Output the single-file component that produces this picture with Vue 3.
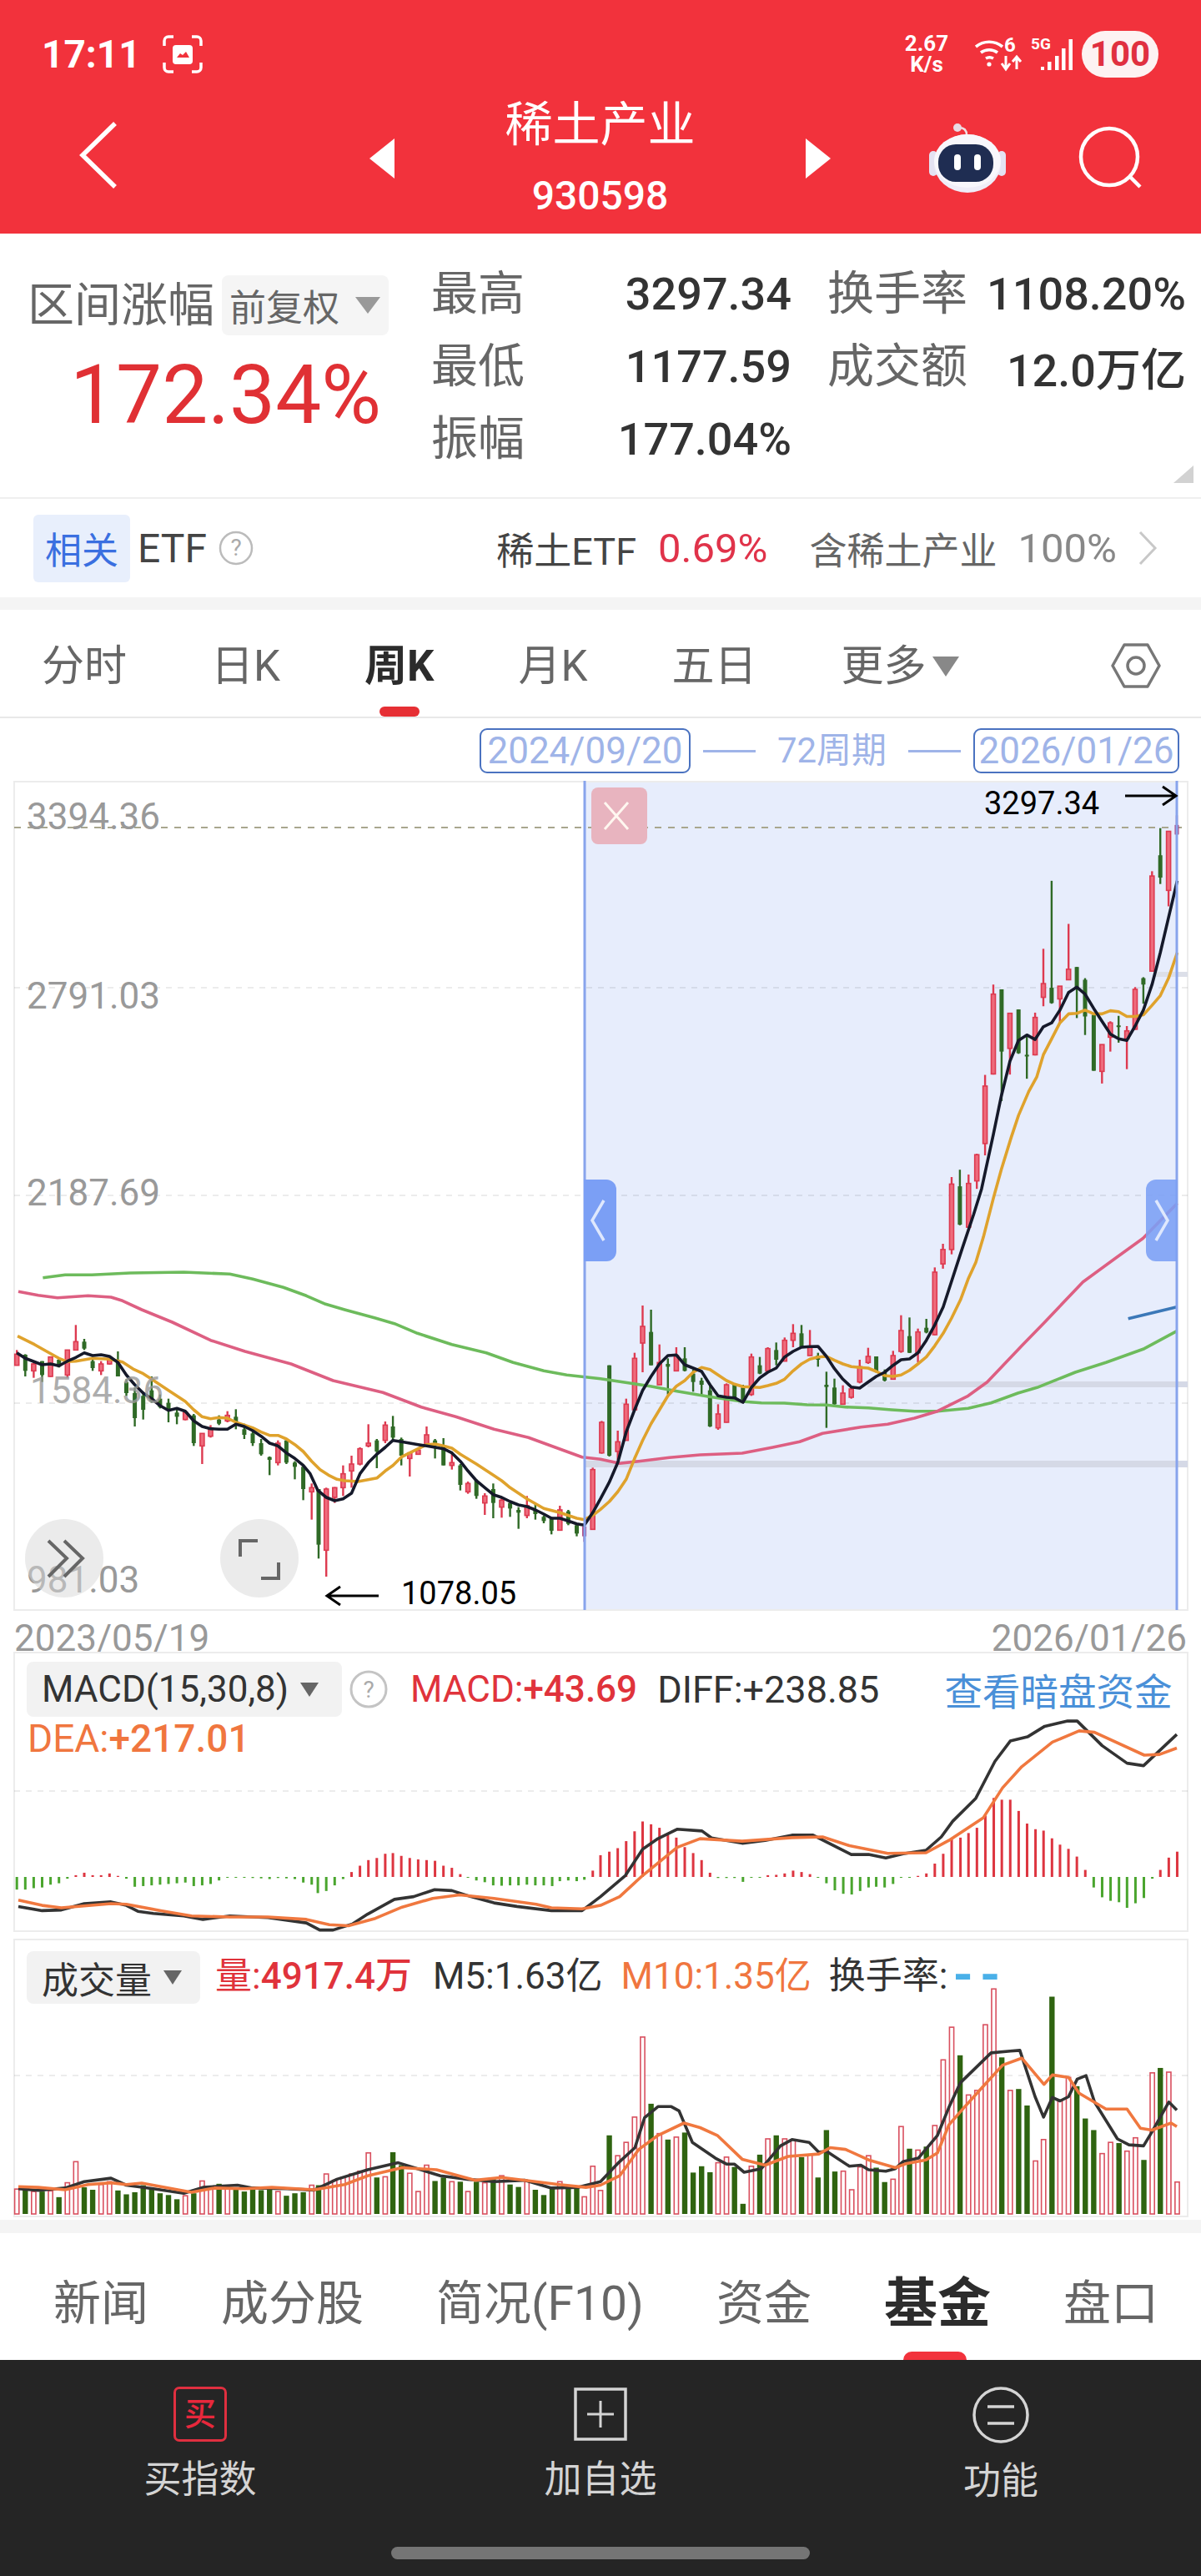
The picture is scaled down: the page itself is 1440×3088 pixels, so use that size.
<script setup>
const zA = (x, y) => [x / 2.178, 1500 + y / 3]
const zB = (x, y) => [720 + x / 2.178, 1500 + y / 3]
const zC = (x, y) => [700 + x / 2.118, 920 + y / 2.613]
const zM = (x, y) => [x / 2.178, 2000 + y / 2.376]
const zN = (x, y) => [720 + x / 2.178, 2000 + y / 2.376]

const line = (parts) =>
  parts
    .map(([f, pts]) => {
      let out = []
      for (let i = 0; i < pts.length; i += 2) out.push(f(pts[i], pts[i + 1]).map((v) => v.toFixed(1)).join(','))
      return out.join(' ')
    })
    .join(' ')

const rawA = `44 r 355 370 410 410;66 g 370 372 430 450;88 r 400 405 430 455;110 g 395 395 445 470;132 r 378 380 450 452;154 g 385 390 415 418;176 r 355 355 445 455;198 r 265 325 355 355;220 g 315 325 350 355;242 g 385 395 420 430;264 r 395 405 430 445;286 r 380 385 405 408;308 g 360 390 450 450;330 g 460 470 510 520;352 g 490 510 600 630;374 g 505 520 570 605;396 g 450 500 540 545;418 g 515 530 560 565;440 g 530 545 570 615;462 g 570 580 595 622;484 r 575 580 605 608;506 g 585 590 690 700;528 r 655 655 700 765;550 r 625 635 665 670;572 g 590 605 620 625;594 r 575 590 610 615;616 g 568 595 615 640;638 g 620 640 660 675;660 g 645 655 690 700;682 g 675 690 730 735;704 g 738 740 750 805;726 r 680 690 760 770;748 g 680 680 760 765;770 g 755 760 775 820;792 g 770 775 855 895;814 r 835 850 865 965;832 g 855 855 1055 1105;852 r 850 855 1075 1170;874 r 848 850 885 905;896 r 770 800 850 880;918 r 735 765 790 850;940 r 705 710 765 770;962 r 622 690 700 705;984 g 675 680 720 780;1006 r 612 625 680 690;1026 g 592 630 670 680;1048 g 670 675 735 770;1070 r 725 725 745 810;1092 r 712 715 730 732;1114 r 630 660 695 700;1136 g 675 680 700 745;1158 g 672 700 770 770;1180 r 720 760 770 785;1202 g 765 770 840 860;1222 r 828 835 865 872;1244 g 820 825 880 890;1266 r 870 880 905 948;1288 g 835 855 905 960;1310 r 885 895 920 958;1332 g 900 905 925 955;1354 g 920 930 940 998;1376 r 880 915 950 960;1398 g 908 930 945 965;1420 g 950 955 970 978;1440 g 955 962 1005 1018;1462 r 915 930 1003 1005;1484 g 930 935 980 985;1506 g 980 985 1015 1025;1526 p 985 990 1025 1045;1548 r 778 785 1000 1002`
const rawB = `3 r 610 615 725 728;23 g 410 410 735 738;45 r 645 685 720 750;67 r 530 550 680 680;89 r 365 385 570 575;110 r 195 270 330 435;132 g 210 290 410 410;154 r 335 400 480 482;176 g 385 405 415 515;198 r 345 375 430 432;220 g 345 385 430 432;242 g 425 440 470 505;264 g 455 465 480 515;286 g 480 500 630 632;307 r 550 585 635 642;329 r 475 480 615 616;350 g 475 480 525 530;372 g 480 490 540 545;394 r 368 380 515 520;416 g 380 410 440 442;437 r 345 350 430 435;459 g 328 355 390 410;481 r 310 320 395 396;503 r 262 295 320 345;525 g 265 295 345 348;547 r 283 345 375 376;568 g 365 375 390 415;590 g 433 480 488 635;611 g 458 490 550 552;633 r 482 510 550 552;655 r 490 495 525 530;677 r 390 415 470 475;699 r 347 378 400 405;720 g 378 378 435 436;742 g 425 435 465 468;764 r 358 375 460 462;785 r 230 285 360 365;807 g 238 305 365 366;829 r 278 290 365 400;851 g 243 275 292 295;873 r 58 75 300 302`
const rawC = `912 r 1492 1510 1555 1570;934 r 1283 1305 1510 1525;955 g 1260 1312 1432 1434;977 r 1275 1303 1440 1442;998 r 1210 1213 1295 1320;1019 r 963 998 1178 1215;1040 r 680 710 960 962;1061 g 695 695 890 1045;1082 r 770 770 880 962;1104 g 758 758 895 897;1125 g 840 900 905 975;1146 r 768 783 900 902;1167 r 568 677 720 748;1188 g 355 690 738 740;1209 r 685 685 725 805;1231 r 490 632 665 666;1252 g 625 625 690 785;1273 g 660 665 780 838;1295 g 775 775 950 950;1316 r 868 868 952 990;1337 r 795 800 845 890;1358 g 778 808 812 862;1379 r 810 825 850 945;1400 r 688 695 820 822;1421 g 657 660 680 740;1443 r 325 340 638 640;1464 g 190 275 345 365;1485 r 200 200 385 435;1506 p 150 180 210 212`

const parse = (raw, f) =>
  raw.split(';').map((s) => {
    const [x, t, a, b, c, d] = s.split(' ')
    const [px, y1] = f(+x, +a)
    return { x: +px.toFixed(1), t, y1, y2: f(+x, +b)[1], y3: f(+x, +c)[1], y4: f(+x, +d)[1] }
  })
const candles = [...parse(rawA, zA), ...parse(rawB, zB), ...parse(rawC, zC)]

const ma5 = line([
  [zA, [44,365,66,385,110,408,132,405,154,412,176,395,198,382,220,365,242,375,264,372,286,378,308,400,330,445,352,480,374,510,396,530,418,555,440,572,462,565,484,575,506,610,528,630,550,638,572,640,594,640,616,622,638,630,660,645,682,665,704,690,726,700,748,725,770,745,792,770,810,800,830,860,852,885,874,897,896,890,918,870,940,800,962,760,984,730,1006,705,1026,680,1048,685,1070,690,1092,695,1114,700,1136,705,1158,710,1180,725,1202,755,1222,790,1244,825,1266,850,1288,875,1310,885,1332,900,1354,912,1376,918,1398,930,1420,945,1440,960,1462,960,1484,970,1506,980,1526,985,1548,940]],
  [zB, [0,890,23,830,45,760,67,650,89,570,110,500,132,450,154,405,176,375,198,373,220,408,242,420,264,432,286,480,307,520,329,525,350,527,372,543,394,490,416,455,437,435,459,420,481,380,503,360,525,345,547,343,568,342,590,378,611,422,633,460,655,488,677,492,699,470,720,450,742,435,764,410,785,390,807,387,829,365,851,320,873,265,895,200]],
  [zC, [960,1510,990,1400,1010,1320,1040,1150,1060,1030,1082,920,1104,855,1125,838,1146,852,1167,812,1188,800,1209,760,1231,705,1252,688,1273,710,1295,755,1316,795,1337,835,1358,850,1379,855,1400,810,1421,760,1443,680,1464,580,1485,470,1507,355]],
])
const ma10 = line([
  [zA, [46,305,90,335,115,355,154,385,176,397,198,395,242,385,286,388,320,398,350,425,374,440,396,460,440,500,484,540,506,570,528,595,550,602,572,598,594,600,616,615,660,635,682,650,704,662,726,662,748,675,770,695,792,720,814,755,836,785,858,805,880,820,900,825,935,828,985,815,1006,790,1026,770,1048,740,1070,725,1092,710,1114,695,1136,693,1158,700,1180,708,1202,730,1244,765,1288,805,1310,825,1332,850,1376,890,1420,925,1462,940,1506,960,1526,965,1548,950]],
  [zB, [0,928,23,900,45,865,67,820,89,745,110,680,132,620,154,570,176,520,198,485,220,465,242,435,264,418,286,425,307,445,329,465,350,478,372,487,394,488,416,490,437,483,459,475,481,460,503,430,525,405,547,388,568,380,590,378,611,392,633,405,655,415,677,418,699,420,720,432,742,447,764,450,785,445,807,428,829,405,851,380,873,340,895,295,917,240,940,175,960,100,980,40]],
  [zC, [1015,1470,1040,1350,1060,1260,1085,1160,1104,1090,1130,1015,1150,970,1167,900,1188,850,1209,800,1231,772,1252,770,1273,760,1295,772,1316,772,1337,762,1358,765,1379,780,1400,780,1421,775,1443,745,1464,715,1485,660,1507,580]],
])
const ma120 = line([
  [zA, [112,95,170,85,240,85,340,78,480,75,600,82,660,100,740,130,800,160,850,190,900,210,980,240,1030,260,1090,295,1180,335,1270,365,1340,400,1420,430,1480,445]],
  [zB, [0,458,80,475,130,485,200,503,280,522,370,540,420,545,480,546,540,552,590,553,640,560,700,563,760,570,820,575,880,575,960,565,1020,545,1090,510,1140,490,1240,435,1320,400,1420,350,1505,287]],
])
const ma60 = line([
  [zA, [48,145,100,158,150,167,230,160,290,165,320,178,370,210,450,255,550,320,640,360,760,405,870,465,1000,508,1100,560,1190,595,1290,640,1380,670,1450,705,1520,740]],
  [zB, [0,748,50,763,100,755,180,742,260,732,370,726,450,705,520,685,580,655,680,632,750,622,820,600,880,575,960,520,1010,470,1100,340,1160,255,1260,110,1345,25]],
  [zC, [1420,1475,1507,1365]],
])
const maBlue = line([[zB, [1378,242,1505,200]]])

const macdA = [-36,-36,-32,-30,-22,-18,-5,5,12,5,5,10,3,-5,-28,-26,-24,-22,-20,-18,-16,-26,-24,-20,-10,-1,-1,-1,-3,-4,-6,-3,-4,-6,-16,-22,-46,-40,-24,-6,14,32,48,54,66,68,60,54,50,48,46,32,26,8,-1,-10,-15,-24,-25,-24,-24,-22,-24,-24,-26,-12,-10,-12,-8,18]
const macdAx = [44,66,88,110,132,154,176,198,220,242,264,286,308,330,352,374,396,418,440,462,484,506,528,550,572,594,616,638,660,682,704,726,748,770,792,814,830,852,874,896,918,940,962,984,1006,1026,1048,1070,1092,1114,1136,1158,1180,1202,1222,1244,1266,1288,1310,1332,1354,1376,1398,1420,1442,1462,1484,1506,1526,1548]
const macdB = '0 62;23 72;45 82;67 102;89 130;110 158;132 150;154 140;176 120;198 112;220 85;242 68;264 48;286 12;307 -3;329 -3;350 -3;372 -14;394 -1;416 -1;437 5;459 6;481 10;503 18;525 14;547 8;568 -1;590 -18;612 -38;634 -48;656 -50;678 -40;700 -30;720 -28;742 -30;764 -20;785 -1;807 -1;829 3;851 10;873 38;895 66;917 108;940 112;961 125;983 140;1005 175;1027 225;1048 220;1070 220;1092 188;1114 152;1136 136;1157 132;1179 110;1200 92;1222 80;1244 58;1266 20;1288 -30;1310 -58;1332 -68;1354 -72;1375 -88;1397 -75;1419 -60;1441 -5;1462 20;1484 55;1506 72'
const macdBars = [
  ...macdA.map((v, i) => ({ x: macdAx[i] / 2.178, v: v / 2.376 })),
  ...macdB.split(';').map((s) => {
    const [x, v] = s.split(' ').map(Number)
    return { x: 720 + x / 2.178, v: v / 2.376 }
  }),
].map((b) => {
  const zero = 2250
  return { x: b.x - 1.5, y: b.v > 0 ? zero - b.v : zero, h: Math.max(Math.abs(b.v), 1), up: b.v > 0 }
})

const diff = line([
  [zM, [48,678,110,690,160,688,220,670,290,665,330,675,360,692,400,698,480,705,530,715,600,705,660,708,700,710,800,725,835,745,870,745,920,728,960,700,1030,658,1080,650,1135,630,1180,633,1230,650,1290,668,1350,678,1440,690,1520,690]],
  [zN, [0,650,65,590,110,515,150,485,200,458,265,463,290,483,370,498,430,490,500,475,555,475,600,500,655,530,700,530,745,540,790,528,850,518,890,480,920,435,980,370,1030,265,1070,207,1115,195,1160,165,1220,150,1245,150,1310,220,1375,270,1418,277,1505,188]],
])
const dea = line([
  [zM, [48,660,110,675,160,682,290,670,330,672,420,690,500,705,600,708,700,708,800,715,860,730,910,733,980,712,1050,680,1130,655,1200,645,1290,655,1400,672,1440,682,1520,685]],
  [zN, [0,675,50,650,110,590,200,510,260,485,370,492,500,482,580,480,650,505,750,527,850,525,910,490,1000,425,1050,340,1100,280,1180,210,1250,178,1290,182,1420,247,1460,245,1505,227]],
])

const volA = '44 r 1483;66 g 1485;88 r 1490;110 g 1490;132 r 1488;154 g 1506;176 r 1465;198 r 1405;220 g 1478;242 g 1485;264 r 1470;286 r 1462;308 g 1487;330 g 1498;352 g 1492;374 g 1472;396 g 1482;418 g 1495;440 g 1500;462 g 1512;484 r 1502;506 g 1495;528 r 1460;550 r 1478;572 g 1468;594 r 1478;616 g 1482;638 g 1490;660 g 1476;682 g 1486;704 g 1484;726 r 1490;748 g 1502;770 g 1495;792 g 1492;814 r 1472;832 g 1472;852 r 1440;874 r 1458;896 r 1450;918 r 1440;940 r 1432;962 r 1380;984 g 1450;1006 r 1448;1026 g 1378;1048 g 1415;1070 r 1438;1092 r 1490;1114 r 1415;1136 g 1460;1158 g 1450;1180 r 1462;1202 g 1462;1222 r 1490;1244 g 1462;1266 r 1465;1288 g 1450;1310 r 1445;1332 g 1470;1354 g 1477;1376 r 1462;1398 g 1485;1420 g 1500;1442 g 1480;1462 r 1462;1484 g 1478;1506 g 1478;1526 r 1505;1548 r 1418'
const volB = '0 r 1487;23 g 1330;45 r 1388;67 r 1350;89 r 1278;110 r 1050;132 g 1240;154 r 1325;176 g 1342;198 r 1335;220 g 1322;242 g 1436;264 g 1418;286 g 1435;307 r 1408;329 r 1392;350 g 1420;372 g 1525;394 r 1418;416 g 1385;437 r 1340;459 g 1330;481 r 1340;503 r 1342;525 g 1392;547 r 1385;568 g 1450;590 g 1315;612 g 1433;634 r 1432;656 r 1485;678 r 1420;700 r 1388;720 g 1422;742 g 1463;764 r 1455;785 r 1305;807 g 1368;829 r 1372;851 g 1362;873 r 1302;895 r 1115;917 r 1022;939 g 1102;961 r 1215;983 r 1202;1005 r 1015;1027 r 913;1048 g 1108;1070 r 1202;1092 g 1198;1114 g 1245;1136 r 1403;1157 r 1342;1179 g 935;1200 r 1230;1222 r 1165;1244 g 1190;1266 g 1282;1288 g 1315;1310 r 1382;1332 r 1350;1354 g 1352;1375 r 1375;1397 r 1337;1419 g 1400;1441 r 1152;1462 g 1138;1484 r 1150;1506 r 1463'
const vols = [
  ...volA.split(';').map((s) => s.split(' ')).map(([x, t, y]) => ({ x: zM(+x, 0)[0], t, y: zM(0, +y)[1] })),
  ...volB.split(';').map((s) => s.split(' ')).map(([x, t, y]) => ({ x: zN(+x, 0)[0], t, y: zN(0, +y)[1] })),
]
const volBase = 2654
const volM5 = line([
  [zM, [48,1482,100,1487,170,1480,220,1462,290,1452,330,1472,400,1482,480,1495,530,1478,620,1472,660,1480,750,1482,820,1486,880,1455,960,1428,1040,1408,1090,1425,1150,1445,1220,1455,1290,1462,1370,1458,1440,1480,1510,1478]],
  [zN, [0,1462,45,1410,90,1365,115,1280,150,1248,185,1248,205,1260,240,1350,300,1395,330,1412,350,1412,375,1435,420,1425,470,1360,500,1342,545,1350,570,1378,590,1375,650,1418,680,1415,700,1428,745,1432,770,1425,790,1405,830,1395,880,1330,910,1250,940,1180,1020,1095,1070,1090,1095,1088,1135,1220,1157,1278,1180,1222,1200,1232,1222,1220,1245,1170,1268,1160,1290,1235,1350,1340,1380,1357,1418,1360,1440,1320,1484,1235,1505,1258]],
])
const volM10 = line([
  [zM, [48,1476,100,1478,170,1485,230,1470,290,1465,330,1470,370,1466,500,1492,560,1480,640,1482,710,1478,820,1485,900,1470,960,1445,1050,1422,1140,1428,1240,1458,1310,1450,1460,1470,1530,1478]],
  [zN, [0,1472,50,1445,100,1370,150,1330,218,1295,260,1308,305,1330,370,1398,430,1415,490,1390,570,1383,600,1365,640,1370,700,1400,770,1422,800,1410,850,1400,880,1380,910,1300,950,1250,1000,1190,1050,1130,1100,1110,1158,1185,1180,1158,1222,1165,1250,1210,1320,1255,1375,1255,1410,1310,1440,1315,1490,1295,1505,1305]],
])

const chartTabs = ['分时', '日K', '周K', '月K', '五日']
const infoTabs = ['新闻', '成分股', '简况(F10)', '资金', '基金', '盘口']
</script>

<template>
  <div class="page">
    <header class="head">
      <div class="status">
        <span class="clock">17:11</span>
        <svg class="shot" width="48" height="46" viewBox="0 0 48 46">
          <path d="M2 13V7a5 5 0 0 1 5-5h6M35 2h6a5 5 0 0 1 5 5v6M46 33v6a5 5 0 0 1-5 5h-6M13 44H7a5 5 0 0 1-5-5v-6" fill="none" stroke="#fff" stroke-width="3.5" />
          <rect x="12" y="12" width="24" height="23" rx="4" fill="#fff" />
          <path d="M17 27l4-5 3 2 4-4 4 7z" fill="#f2323c" />
        </svg>
        <div class="status-right">
          <div class="speed"><span>2.67</span><span>K/s</span></div>
          <svg class="wifi" width="58" height="54" viewBox="0 -6 58 54">
            <path d="M1 12a25 25 0 0 1 32 0M7 19a17 17 0 0 1 20 0M13 26a9 9 0 0 1 9 0" fill="none" stroke="#fff" stroke-width="3.6" />
            <circle cx="17" cy="33" r="2.6" fill="#fff" />
            <text x="35" y="18" class="tiny tiny-6">6</text>
            <path d="M37 23v15M32 32l5 7 5-7M50 39V24M45 30l5-6 5 6" fill="none" stroke="#fff" stroke-width="3" />
          </svg>
          <svg class="signal" width="51" height="52" viewBox="0 -4 51 52">
            <text x="0" y="16" class="tiny">5G</text>
            <path d="M12 37h4v4h-4zM20 31h4.500v10H20zM29 24h4.500v17H29zM37 15h4.500v26H37zM45.500 4h4.500v37h-4.500z" fill="#fff" />
          </svg>
          <span class="battery">100</span>
        </div>
      </div>
      <div class="nav">
        <svg class="back" width="46" height="82" viewBox="0 0 46 82">
          <path d="M43 2L4 40l39 38" fill="none" stroke="#fff" stroke-width="5.500" />
        </svg>
        <svg class="tri-l" width="30" height="48" viewBox="0 0 30 48"><path d="M30 0v48L0 24z" fill="#fff" /></svg>
        <div class="title">
          <span class="title-main">稀土产业</span>
          <span class="title-code">930598</span>
        </div>
        <svg class="tri-r" width="30" height="48" viewBox="0 0 30 48"><path d="M0 0v48l30-24z" fill="#fff" /></svg>
        <svg class="robot" width="92" height="84" viewBox="0 0 92 84">
          <path d="M36 6c6 0 9 3 9 9" fill="none" stroke="#f0dfe4" stroke-width="2.500" />
          <circle cx="34" cy="6" r="5" fill="#e8dbe4" />
          <rect x="0" y="34" width="10" height="30" rx="5" fill="#e4e2f2" />
          <rect x="82" y="34" width="10" height="30" rx="5" fill="#e4e2f2" />
          <ellipse cx="46" cy="49" rx="40" ry="35" fill="#efedf8" />
          <ellipse cx="46" cy="46" rx="40" ry="32" fill="#f8f7fc" />
          <rect x="11" y="26" width="66" height="45" rx="21" fill="#1f2d52" />
          <rect x="30" y="38" width="8" height="19" rx="4" fill="#fff" />
          <rect x="54" y="38" width="8" height="19" rx="4" fill="#fff" />
        </svg>
        <svg class="search" width="84" height="84" viewBox="0 0 84 84">
          <circle cx="40" cy="40" r="34" fill="none" stroke="#fff" stroke-width="4.500" />
          <path d="M65 64l12 12" stroke="#fff" stroke-width="4.500" fill="none" />
        </svg>
      </div>
    </header>

    <section class="summary">
      <div class="range-box">
        <div class="range-top">
          <span class="range-label">区间涨幅</span>
          <span class="pill">前复权<i class="tri-down"></i></span>
        </div>
        <div class="range-value">172.34%</div>
      </div>
      <div class="stats">
        <div class="stat"><span>最高</span><b>3297.34</b></div>
        <div class="stat"><span>换手率</span><b>1108.20%</b></div>
        <div class="stat"><span>最低</span><b>1177.59</b></div>
        <div class="stat"><span>成交额</span><b>12.0万亿</b></div>
        <div class="stat"><span>振幅</span><b>177.04%</b></div>
      </div>
      <i class="corner"></i>
    </section>

    <section class="etf">
      <span class="tag">相关</span>
      <span class="etf-name">ETF</span>
      <svg class="help" width="42" height="42" viewBox="0 0 42 42">
        <circle cx="21" cy="21" r="19" fill="none" stroke="#bbb" stroke-width="2.500" />
        <text x="21" y="30" text-anchor="middle" class="help-mark">?</text>
      </svg>
      <div class="etf-right">
        <span class="etf-a">稀土ETF</span>
        <span class="etf-red">0.69%</span>
        <span class="etf-b">含稀土产业</span>
        <span class="etf-gray">100%</span>
        <svg width="24" height="42" viewBox="0 0 24 42"><path d="M3 2l18 19L3 40" fill="none" stroke="#c8c8c8" stroke-width="3" /></svg>
      </div>
    </section>

    <div class="band"></div>

    <nav class="ctabs">
      <span v-for="t in chartTabs" :key="t" class="ctab" :class="{ on: t === '周K' }">{{ t }}</span>
      <span class="ctab more">更多<i class="tri-more"></i></span>
      <svg class="hex" width="60" height="56" viewBox="0 0 60 56">
        <path d="M16 3h28l14 25-14 25H16L2 28z" fill="none" stroke="#777" stroke-width="3.500" stroke-linejoin="round" />
        <circle cx="30" cy="28" r="10" fill="none" stroke="#777" stroke-width="3.500" />
      </svg>
    </nav>

    <div class="period">
      <span class="date-box first">2024/09/20</span>
      <i class="dash left"></i>
      <span class="weeks">72周期</span>
      <i class="dash right"></i>
      <span class="date-box">2026/01/26</span>
    </div>

    <svg class="chart main" width="1440" height="996" viewBox="0 936 1440 996">
      <rect x="17" y="937" width="1407" height="993" fill="#fff" stroke="#ececec" stroke-width="2" />
      <rect x="701" y="938" width="711" height="991" fill="#e7edfc" />
      <path d="M17 1184H1424M17 1433H1424M17 1682H1424" stroke="#000" stroke-opacity="0.1" stroke-width="1.500" stroke-dasharray="7 7" fill="none" />
      <rect x="1040" y="1656" width="384" height="7" fill="#d5d9e6" />
      <rect x="701" y="1751" width="723" height="8" fill="#d5d9e6" />
      <rect x="1385" y="1165" width="39" height="6" fill="#dcdfe8" />
      <path d="M17 992H1424" stroke="#a8a68e" stroke-width="2" stroke-dasharray="8 8" />
      <g v-for="(c, i) in candles" :key="i" :class="'c-' + c.t">
        <path :d="`M${c.x} ${c.y1}V${c.y4}`" class="wick" />
        <rect :x="c.x - 2.500" :y="c.y2" width="5" :height="Math.max(c.y3 - c.y2, 2)" class="body" />
      </g>
      <polyline :points="ma120" class="ln" stroke="#6dbb5c" />
      <polyline :points="ma60" class="ln" stroke="#dd5f82" />
      <polyline :points="maBlue" class="ln" stroke="#3b78b8" />
      <polyline :points="ma10" class="ln" stroke="#dfa22c" />
      <polyline :points="ma5" class="ln" stroke="#15192a" />
      <text class="axis" x="32" y="994">3394.36</text>
      <text class="axis" x="32" y="1209">2791.03</text>
      <text class="axis" x="32" y="1445">2187.69</text>
      <text class="axis faded" x="36" y="1682">1584.36</text>
      <text class="axis" x="32" y="1909">981.03</text>
      <path d="M701 936V1930M1411 936V1930" stroke="#88a4ec" stroke-width="3" />
      <rect x="709" y="944" width="67" height="68" rx="8" fill="#e8b4bf" />
      <path d="M725 962l28 32M753 962l-28 32" stroke="#fff7f0" stroke-width="3" fill="none" />
      <path d="M700 1414h27a12 12 0 0 1 12 12v74a12 12 0 0 1-12 12h-27z" fill="#7b9ff5" />
      <path d="M1411 1414h-25a12 12 0 0 0-12 12v74a12 12 0 0 0 12 12h25z" fill="#7b9ff5" fill-opacity="0.88" />
      <path d="M724 1439l-14 24 14 24M1386 1439l14 24-14 24" stroke="#dfe8fd" stroke-width="3.500" fill="none" />
      <text class="mark" x="1180" y="976">3297.34</text>
      <path d="M1349 954H1410M1394 943l16 11-16 11" stroke="#000" stroke-width="3" fill="none" />
      <text class="mark" x="481" y="1923">1078.05</text>
      <path d="M454 1913H392M408 1902l-16 11 16 11" stroke="#000" stroke-width="3" fill="none" />
      <circle cx="77" cy="1868" r="47" fill="#d8d8d8" fill-opacity="0.5" />
      <circle cx="311" cy="1868" r="47" fill="#d8d8d8" fill-opacity="0.5" />
      <path d="M58 1847l22 21-22 22M77 1847l22 21-22 22" stroke="#666" stroke-width="4" fill="none" />
      <path d="M288 1866v-19h21M313 1892h21v-19" stroke="#666" stroke-width="4" fill="none" />
    </svg>

    <div class="dates">
      <span>2023/05/19</span>
      <span>2026/01/26</span>
    </div>

    <div class="panel macd">
      <svg class="chart" width="1440" height="344" viewBox="0 1980 1440 344">
        <rect x="17" y="1981" width="1407" height="334" fill="none" stroke="#ececec" stroke-width="2" />
        <path d="M17 2147H1424" stroke="#000" stroke-opacity="0.1" stroke-width="1.500" stroke-dasharray="7 7" />
        <rect v-for="(b, i) in macdBars" :key="i" :x="b.x" :y="b.y" width="3" :height="b.h" :fill="b.up ? '#dd3540' : '#4aa52e'" />
        <polyline :points="diff" class="ln" stroke="#333" />
        <polyline :points="dea" class="ln" stroke="#f0783f" />
      </svg>
      <div class="legend">
        <div class="legend-row">
          <span class="sel w-macd">MACD(15,30,8)<i class="tri-sel"></i></span>
          <svg class="help-b" width="46" height="46" viewBox="0 0 46 46">
            <circle cx="23" cy="23" r="21" fill="none" stroke="#c4c4c4" stroke-width="3" />
            <text x="23" y="33" text-anchor="middle" class="help-mark">?</text>
          </svg>
          <span class="l-red l-macd">MACD:<b>+43.69</b></span>
          <span class="l-dark l-diff">DIFF:+238.85</span>
          <span class="l-blue">查看暗盘资金</span>
        </div>
        <div class="l-orange l-dea">DEA:<b>+217.01</b></div>
      </div>
    </div>

    <div class="panel vol">
      <svg class="chart" width="1440" height="337" viewBox="0 2324 1440 337">
        <rect x="17" y="2325" width="1407" height="332" fill="#fff" stroke="#ececec" stroke-width="2" />
        <path d="M17 2488H1424" stroke="#000" stroke-opacity="0.1" stroke-width="1.500" stroke-dasharray="7 7" />
        <template v-for="(v, i) in vols" :key="i">
          <rect v-if="v.t === 'r'" :x="v.x - 2.600" :y="v.y" width="5.200" :height="volBase - v.y" fill="#fff" stroke="#d9505f" stroke-width="1.600" />
          <rect v-else :x="v.x - 3.200" :y="v.y" width="6.400" :height="volBase - v.y" fill="#2f6410" />
        </template>
        <polyline :points="volM5" class="ln" stroke="#333" />
        <polyline :points="volM10" class="ln" stroke="#f0783f" />
      </svg>
      <div class="legend vol-legend">
        <div class="legend-row">
          <span class="sel w-vol">成交量<i class="tri-sel"></i></span>
          <span class="l-red l-v1">量:<b>4917.4万</b></span>
          <span class="l-dark l-v2">M5:1.63亿</span>
          <span class="l-orange l-v3">M10:1.35亿</span>
          <span class="l-dark l-v4">换手率:<em>--</em></span>
        </div>
      </div>
    </div>

    <div class="band band2"></div>

    <nav class="itabs">
      <span v-for="t in infoTabs" :key="t" class="itab" :class="{ on: t === '基金' }">{{ t }}</span>
    </nav>

    <footer class="foot">
      <div class="foot-grid">
        <div class="foot-item">
          <span class="buy"><span>买</span></span>
          <span>买指数</span>
        </div>
        <div class="foot-item">
          <svg width="66" height="66" viewBox="0 0 66 66">
            <rect x="3" y="3" width="60" height="60" fill="none" stroke="#d4d4d4" stroke-width="3.500" />
            <path d="M33 17v32M17 33h32" stroke="#d4d4d4" stroke-width="3" fill="none" />
          </svg>
          <span>加自选</span>
        </div>
        <div class="foot-item">
          <svg width="68" height="68" viewBox="0 0 68 68">
            <circle cx="34" cy="34" r="32" fill="none" stroke="#d4d4d4" stroke-width="3.500" />
            <path d="M18 24h32M18 44h32" stroke="#d4d4d4" stroke-width="3.500" fill="none" />
          </svg>
          <span>功能</span>
        </div>
      </div>
      <i class="home"></i>
    </footer>
  </div>
</template>

<style>
html,
body {
  margin: 0;
  background: #fff;
}
</style>

<style scoped>
.page {
  width: 1440px;
  height: 3088px;
  overflow: hidden;
  display: flex;
  flex-direction: column;
  background: #fff;
  font-family: Roboto, "Noto Sans CJK SC", sans-serif;
  color: #333;
}
i,
em {
  font-style: normal;
}
svg {
  display: block;
  flex: none;
}

/* header */
.head {
  height: 280px;
  background: #f2323c;
  color: #fff;
  flex: none;
}
.status {
  height: 130px;
  display: flex;
  align-items: center;
  padding: 0 51px 0 50px;
  box-sizing: border-box;
}
.clock {
  font-size: 46px;
  font-weight: 700;
  line-height: 1;
}
.shot {
  margin-left: 26px;
}
.status-right {
  margin-left: auto;
  display: flex;
  align-items: center;
}
.speed {
  display: flex;
  flex-direction: column;
  align-items: center;
  font-size: 26px;
  font-weight: 700;
  line-height: 25px;
  width: 56px;
}
.wifi {
  margin-left: 30px;
}
.signal {
  margin-left: 9px;
}
.tiny {
  font-size: 19px;
  font-weight: 700;
  fill: #fff;
  font-family: Roboto, sans-serif;
}
.tiny-6 {
  font-size: 24px;
}
.battery {
  margin-left: 10px;
  width: 92px;
  height: 56px;
  border-radius: 28px;
  background: #fdf2f2;
  color: #e03040;
  font-size: 42px;
  font-weight: 700;
  line-height: 56px;
  text-align: center;
}
.nav {
  height: 150px;
  display: flex;
  align-items: center;
}
.back {
  margin: -36px 0 0 95px;
}
.tri-l {
  margin: -31px 0 0 302px;
}
.title {
  width: 493px;
  display: flex;
  flex-direction: column;
  align-items: center;
  margin-top: -30px;
}
.title-main {
  font-size: 57px;
  line-height: 72px;
}
.title-code {
  font-size: 48px;
  font-weight: 500;
  line-height: 62px;
  margin-top: 18px;
}
.tri-r {
  margin-top: -31px;
}
.robot {
  margin: -32px 0 0 118px;
}
.search {
  margin: -30px 0 0 84px;
}

/* summary */
.summary {
  position: relative;
  height: 316px;
  flex: none;
  display: flex;
  border-bottom: 2px solid #efefef;
}
.range-box {
  width: 517px;
  padding: 50px 0 0 33px;
  box-sizing: border-box;
}
.range-top {
  display: flex;
  align-items: center;
  height: 72px;
}
.range-label {
  font-size: 56px;
  color: #666;
  line-height: 72px;
  width: 233px;
}
.pill {
  width: 200px;
  height: 72px;
  background: #f5f5f5;
  border-radius: 8px;
  display: flex;
  align-items: center;
  padding-left: 9px;
  box-sizing: border-box;
  font-size: 44px;
  color: #666;
}
.tri-down {
  margin-left: 19px;
  border: 15px solid transparent;
  border-top: 20px solid #999;
  border-bottom: 0;
}
.range-value {
  margin-top: 16px;
  width: 424px;
  text-align: right;
  font-size: 98px;
  line-height: 112px;
  color: #e03034;
}
.stats {
  display: grid;
  grid-template-columns: 432px 430px;
  grid-auto-rows: 87px;
  column-gap: 43px;
  padding-top: 27px;
}
.stat {
  display: flex;
  align-items: center;
  justify-content: space-between;
}
.stat span {
  font-size: 56px;
  color: #666;
  margin-top: -8px;
}
.stat b {
  font-size: 54px;
  font-weight: 500;
  color: #333;
  margin-top: 4px;
}
.corner {
  position: absolute;
  right: 9px;
  bottom: 17px;
  border-left: 24px solid transparent;
  border-bottom: 21px solid #d2d2d2;
}

/* etf */
.etf {
  height: 118px;
  flex: none;
  display: flex;
  align-items: center;
  padding: 0 52px 0 40px;
}
.tag {
  width: 116px;
  height: 81px;
  background: #e8effc;
  border-radius: 6px;
  color: #3a6fe0;
  font-size: 44px;
  line-height: 88px;
  text-align: center;
}
.etf-name {
  margin-left: 9px;
  font-size: 48px;
  color: #444;
}
.help {
  margin-left: 14px;
}
.help-mark {
  font-size: 28px;
  fill: #aaa;
  font-family: Roboto, sans-serif;
}
.etf-right {
  margin-left: auto;
  display: flex;
  align-items: center;
  font-size: 45px;
  color: #444;
}
.etf-red {
  margin-left: 26px;
  font-size: 49px;
  color: #e0334a;
}
.etf-b {
  margin-left: 50px;
  color: #666;
}
.etf-gray {
  margin-left: 25px;
  font-size: 49px;
  color: #888;
}
.etf-right svg {
  margin-left: 25px;
}
.band {
  height: 15px;
  background: #f4f4f4;
  flex: none;
}

/* chart tabs */
.ctabs {
  height: 130px;
  flex: none;
  box-sizing: border-box;
  border-bottom: 2px solid #e8e8e8;
  display: flex;
  align-items: center;
  padding: 0 48px 0 50px;
  gap: 101px;
  font-size: 51px;
  color: #666;
}
.ctab {
  position: relative;
  line-height: 60px;
  margin-top: 8px;
}
.ctab.on {
  font-weight: 700;
  color: #2c2c2c;
}
.ctab.on::after {
  content: "";
  position: absolute;
  left: 18px;
  bottom: -30px;
  width: 48px;
  height: 12px;
  border-radius: 6px;
  background: #e62f34;
}
.more {
  display: flex;
  align-items: center;
}
.tri-more {
  margin-left: 8px;
  border: 16px solid transparent;
  border-top: 24px solid #888;
  border-bottom: 0;
}
.hex {
  margin-left: auto;
  margin-top: 6px;
}

/* period */
.period {
  height: 75px;
  flex: none;
  box-sizing: border-box;
  padding: 12px 26px 0 0;
  display: flex;
  justify-content: flex-end;
  align-items: flex-start;
  font-size: 44px;
  color: #9fb4e8;
}
.date-box {
  height: 54px;
  width: 247px;
  box-sizing: border-box;
  border: 2px solid #4a72c0;
  border-radius: 9px;
  line-height: 50px;
  text-align: center;
  white-space: nowrap;
}
.date-box.first {
  width: 253px;
}
.dash {
  width: 63px;
  height: 3px;
  background: #9fb4e8;
  margin-top: 26px;
}
.dash.left {
  margin-left: 15px;
}
.dash.right {
  margin-right: 15px;
}
.weeks {
  width: 183px;
  text-align: center;
  line-height: 54px;
  font-size: 42px;
}

/* charts */
.chart {
  flex: none;
}
.axis {
  font-size: 44px;
  fill: #999;
  font-family: Roboto, sans-serif;
}
.faded {
  opacity: 0.8;
}
.mark {
  font-size: 38px;
  fill: #000;
  font-family: Roboto, sans-serif;
}
.wick {
  stroke-width: 2.4;
  fill: none;
}
.c-r .wick {
  stroke: #dd3a50;
}
.c-r .body {
  stroke: #dd3a50;
  stroke-width: 1.6;
  fill: #ee6b7c;
}
.c-g .wick {
  stroke: #2f6a26;
}
.c-g .body {
  fill: #2f6a26;
}
.c-p .wick {
  stroke: #a8407c;
}
.c-p .body {
  fill: #a8407c;
}
.ln {
  fill: none;
  stroke-width: 3.6;
  stroke-linejoin: round;
}
.dates {
  height: 48px;
  flex: none;
  display: flex;
  justify-content: space-between;
  padding: 10px 17px 0 17px;
  box-sizing: border-box;
  font-size: 44px;
  line-height: 44px;
  color: #999;
}
.panel {
  position: relative;
  flex: none;
}
.legend {
  position: absolute;
  left: 32px;
  right: 0;
  top: 12px;
}
.vol-legend {
  top: 15px;
}
.legend-row {
  display: flex;
  align-items: center;
  font-size: 44px;
}
.sel {
  background: #f2f2f2;
  border-radius: 8px;
  height: 66px;
  display: flex;
  align-items: center;
  padding-left: 18px;
  box-sizing: border-box;
  color: #333;
  white-space: nowrap;
}
.w-macd {
  width: 378px;
}
.w-vol {
  width: 208px;
  height: 63px;
}
.tri-sel {
  margin-left: 14px;
  border: 11px solid transparent;
  border-top: 17px solid #666;
  border-bottom: 0;
}
.help-b {
  margin-left: 9px;
}
.l-red {
  color: #e0333b;
}
.l-red b,
.l-orange b {
  font-weight: 500;
}
.l-orange {
  color: #f0763f;
}
.l-dark {
  color: #333;
}
.l-blue {
  color: #4a90d8;
  font-size: 45.500px;
  margin-left: 78px;
}
.l-macd {
  margin-left: 27px;
  font-size: 44px;
}
.l-diff {
  margin-left: 24px;
  font-size: 45px;
}
.l-dea {
  margin-left: 1px;
  font-size: 46px;
  line-height: 48px;
  margin-top: 2px;
}
.vol-legend .l-red,
.vol-legend .l-dark,
.vol-legend .l-orange {
  margin-top: -12px;
}
.l-v1 {
  margin-left: 18px;
}
.l-v2 {
  margin-left: 25px;
}
.l-v3 {
  margin-left: 22px;
}
.l-v4 {
  margin-left: 21px;
}
.l-v4 em {
  display: inline-block;
  color: #4ab0e8;
  font-weight: 700;
  font-size: 62px;
  line-height: 44px;
  letter-spacing: 8px;
  margin: 12px 0 0 6px;
  vertical-align: top;
}
.band2 {
  height: 16px;
}

/* info tabs */
.itabs {
  height: 152px;
  flex: none;
  box-sizing: border-box;
  padding: 18px 0 0 64px;
  display: flex;
  align-items: center;
  gap: 87px;
  font-size: 57px;
  color: #666;
}
.itab {
  position: relative;
  line-height: 70px;
  white-space: nowrap;
}
.itab.on {
  font-size: 64px;
  font-weight: 700;
  color: #2c2c2c;
}
.itab.on::after {
  content: "";
  position: absolute;
  left: 23px;
  bottom: -32px;
  width: 76px;
  height: 10px;
  border-radius: 10px 10px 0 0;
  background: #f2323c;
}

/* footer */
.foot {
  flex: 1;
  background: #252525;
  display: flex;
  flex-direction: column;
  align-items: center;
  padding-top: 32px;
  box-sizing: border-box;
}
.foot-grid {
  width: 1440px;
  display: grid;
  grid-template-columns: 480px 480px 480px;
}
.foot-item {
  display: flex;
  flex-direction: column;
  align-items: center;
  color: #d4d4d4;
  font-size: 45px;
  line-height: 60px;
  gap: 16px;
  height: 160px;
}
.buy {
  width: 64px;
  height: 66px;
  box-sizing: border-box;
  border: 3.500px solid #e02f3f;
  border-radius: 7px;
  display: flex;
  align-items: center;
  justify-content: center;
  color: #e8283c;
  font-size: 38px;
  font-weight: 500;
  line-height: 1;
}
.home {
  width: 502px;
  height: 15px;
  border-radius: 8px;
  background: #757575;
  margin-top: 32px;
}
</style>
